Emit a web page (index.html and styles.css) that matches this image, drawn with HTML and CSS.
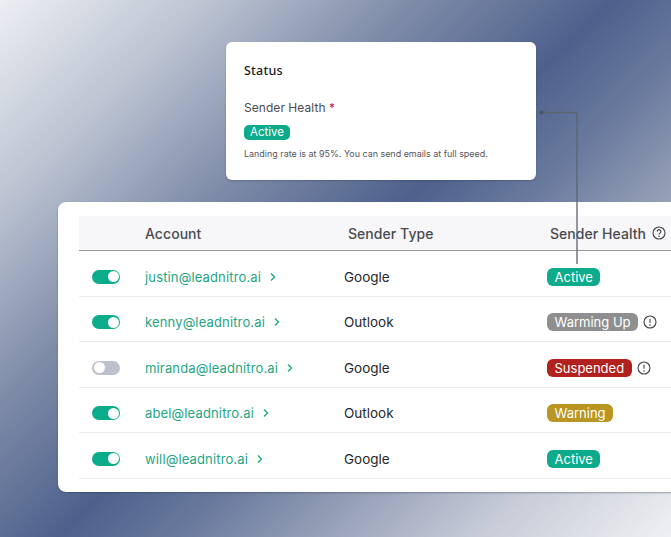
FILE: index.html
```html
<!DOCTYPE html>
<html lang="en">
<head>
  <meta charset="UTF-8">
  <title>Sender Health</title>
  <link rel="stylesheet" href="styles.css">
</head>
<body>
  <div class="scene">

    <!-- Status card -->
    <div class="status-card">
      <h2>Status</h2>
      <div class="field-label">Sender Health <span class="req">*</span></div>
      <span class="badge small green">Active</span>
      <p>Landing rate is at 95%. You can send emails at full speed.</p>
    </div>

    <!-- Accounts table -->
    <div class="table-card">
      <div class="row head">
        <div></div>
        <div>Account</div>
        <div class="type-head">Sender Type</div>
        <div class="health-head">Sender Health
          <svg class="icon" viewBox="0 0 14 14"><circle cx="7" cy="7" r="6"/><path d="M5.200 5.500a1.850 1.850 0 1 1 2.800 1.600c-.7.400-1 .7-1 1.300"/><circle class="dot" cx="7" cy="10.300" r=".75"/></svg>
        </div>
      </div>

      <div class="row">
        <div><span class="toggle on"></span></div>
        <div class="email">justin@leadnitro.ai <svg class="chev" viewBox="0 0 8 10"><path d="M2 1.500 5.500 5 2 8.500"/></svg></div>
        <div>Google</div>
        <div class="health"><span class="badge green">Active</span></div>
      </div>

      <div class="row">
        <div><span class="toggle on"></span></div>
        <div class="email">kenny@leadnitro.ai <svg class="chev" viewBox="0 0 8 10"><path d="M2 1.500 5.500 5 2 8.500"/></svg></div>
        <div>Outlook</div>
        <div class="health"><span class="badge gray">Warming Up</span>
          <svg class="icon" viewBox="0 0 14 14"><circle cx="7" cy="7" r="6"/><path d="M7 3.700v4"/><circle class="dot" cx="7" cy="10" r=".8"/></svg>
        </div>
      </div>

      <div class="row">
        <div><span class="toggle"></span></div>
        <div class="email">miranda@leadnitro.ai <svg class="chev" viewBox="0 0 8 10"><path d="M2 1.500 5.500 5 2 8.500"/></svg></div>
        <div>Google</div>
        <div class="health"><span class="badge red">Suspended</span>
          <svg class="icon" viewBox="0 0 14 14"><circle cx="7" cy="7" r="6"/><path d="M7 3.700v4"/><circle class="dot" cx="7" cy="10" r=".8"/></svg>
        </div>
      </div>

      <div class="row">
        <div><span class="toggle on"></span></div>
        <div class="email">abel@leadnitro.ai <svg class="chev" viewBox="0 0 8 10"><path d="M2 1.500 5.500 5 2 8.500"/></svg></div>
        <div>Outlook</div>
        <div class="health"><span class="badge amber">Warning</span></div>
      </div>

      <div class="row">
        <div><span class="toggle on"></span></div>
        <div class="email">will@leadnitro.ai <svg class="chev" viewBox="0 0 8 10"><path d="M2 1.500 5.500 5 2 8.500"/></svg></div>
        <div>Google</div>
        <div class="health"><span class="badge green">Active</span></div>
      </div>
    </div>

    <!-- Connector from the table badge up to the status card -->
    <svg class="connector" viewBox="0 0 42 156">
      <path d="M38 153V4q0-2.500-2.500-2.500H2"/>
      <circle class="tip" cx="2.500" cy="1.500" r="2"/>
    </svg>
  </div>
</body>
</html>
```

FILE: styles.css
```css
body {
  margin: 0;
  font-family: Inter, sans-serif;
  color: #27272a;
}
.scene {
  position: relative;
  width: 671px;
  height: 537px;
  overflow: hidden;
  padding-top: 42px;
  box-sizing: border-box;
  background: linear-gradient(136deg, #eceef3 0%, #bcc4d2 17%, #7e8ba8 34%, #4e618c 50%, #6a7a9e 60%, #929db5 70%, #c6cbd7 84%, #e0e2e8 94%, #eef0f4 100%);
}
.status-card {
  width: 310px;
  height: 138px;
  margin-left: 226px;
  padding: 22px 18px 0;
  box-sizing: border-box;
  background: #fff;
  border-radius: 6px;
  box-shadow: 0 1px 2px rgba(40, 50, 80, .3);
}
.status-card h2 {
  margin: 0;
  font-family: "Noto Sans", sans-serif;
  font-size: 12.500px;
  line-height: 14px;
  font-weight: 500;
  letter-spacing: .2px;
  color: #1c1c20;
}
.field-label {
  margin-top: 22px;
  font-size: 12px;
  line-height: 16px;
  letter-spacing: .05px;
  color: #4b4b50;
}
.req {
  color: #b3262c;
}
.status-card p {
  margin: 8px 0 0;
  font-size: 8.950px;
  line-height: 12px;
  color: #55555a;
}
.badge {
  display: inline-block;
  padding: 0 7.500px;
  border-radius: 6px;
  height: 18px;
  line-height: 18px;
  font-size: 13px;
  color: #fff;
}
.badge.small {
  display: block;
  width: fit-content;
  margin-top: 9px;
  padding: 0 6px;
  height: 15px;
  line-height: 15px;
  font-size: 11.500px;
  border-radius: 5px;
}
.green { background: #0bab8b; }
.gray { background: #8f8f90; }
.red { background: #b3211f; }
.amber { background: #b99522; }

.table-card {
  width: 640px;
  height: 290px;
  margin: 22px 0 0 58px;
  padding: 14px 0 0 21px;
  box-sizing: border-box;
  background: #fff;
  border-radius: 8px;
  box-shadow: 0 1px 2px rgba(40, 50, 80, .4);
}
.row {
  display: grid;
  grid-template-columns: 66px 199px 203px 1fr;
  align-items: center;
  height: 45.500px;
  padding-top: 7px;
  font-size: 13.500px;
  border-bottom: 1px solid #ececef;
  box-sizing: border-box;
  color: #27272a;
}
.row > div:first-child {
  padding-left: 13px;
}
.row.head {
  height: 35px;
  padding-top: 0;
  font-size: 14px;
  font-weight: 500;
  letter-spacing: .05px;
  color: #4a4a4f;
  background: #f7f7f9;
  border-bottom: 1px solid #9a9a9d;
}
.type-head {
  padding-left: 4px;
}
.health-head {
  padding-left: 3px;
  display: flex;
  align-items: center;
  gap: 6px;
  white-space: nowrap;
}
.toggle {
  display: block;
  position: relative;
  width: 28px;
  height: 14px;
  border-radius: 7px;
  background: #bcc1cb;
}
.toggle::after {
  content: "";
  position: absolute;
  top: 1.500px;
  left: 1.500px;
  width: 11px;
  height: 11px;
  border-radius: 50%;
  background: #fff;
}
.toggle.on {
  background: #0bab8b;
}
.toggle.on::after {
  left: 15.500px;
}
.email {
  color: #1fa583;
  display: flex;
  align-items: center;
  gap: 8px;
  font-size: 13px;
  letter-spacing: .15px;
}
.chev {
  width: 8px;
  height: 10px;
  fill: none;
  stroke: #1fa583;
  stroke-width: 1.400;
}
.health {
  display: flex;
  align-items: center;
  gap: 5px;
}
.icon {
  width: 14px;
  height: 14px;
  fill: none;
  stroke: #3f3f44;
  stroke-width: 1.100;
}
.icon .dot {
  fill: #3f3f44;
  stroke: none;
}
.connector {
  position: absolute;
  left: 539px;
  top: 111px;
  width: 42px;
  height: 156px;
  overflow: visible;
  fill: none;
  stroke: #5c6470;
  stroke-width: 1.300;
}
.connector .tip {
  fill: #4c5564;
  stroke: none;
}
```
